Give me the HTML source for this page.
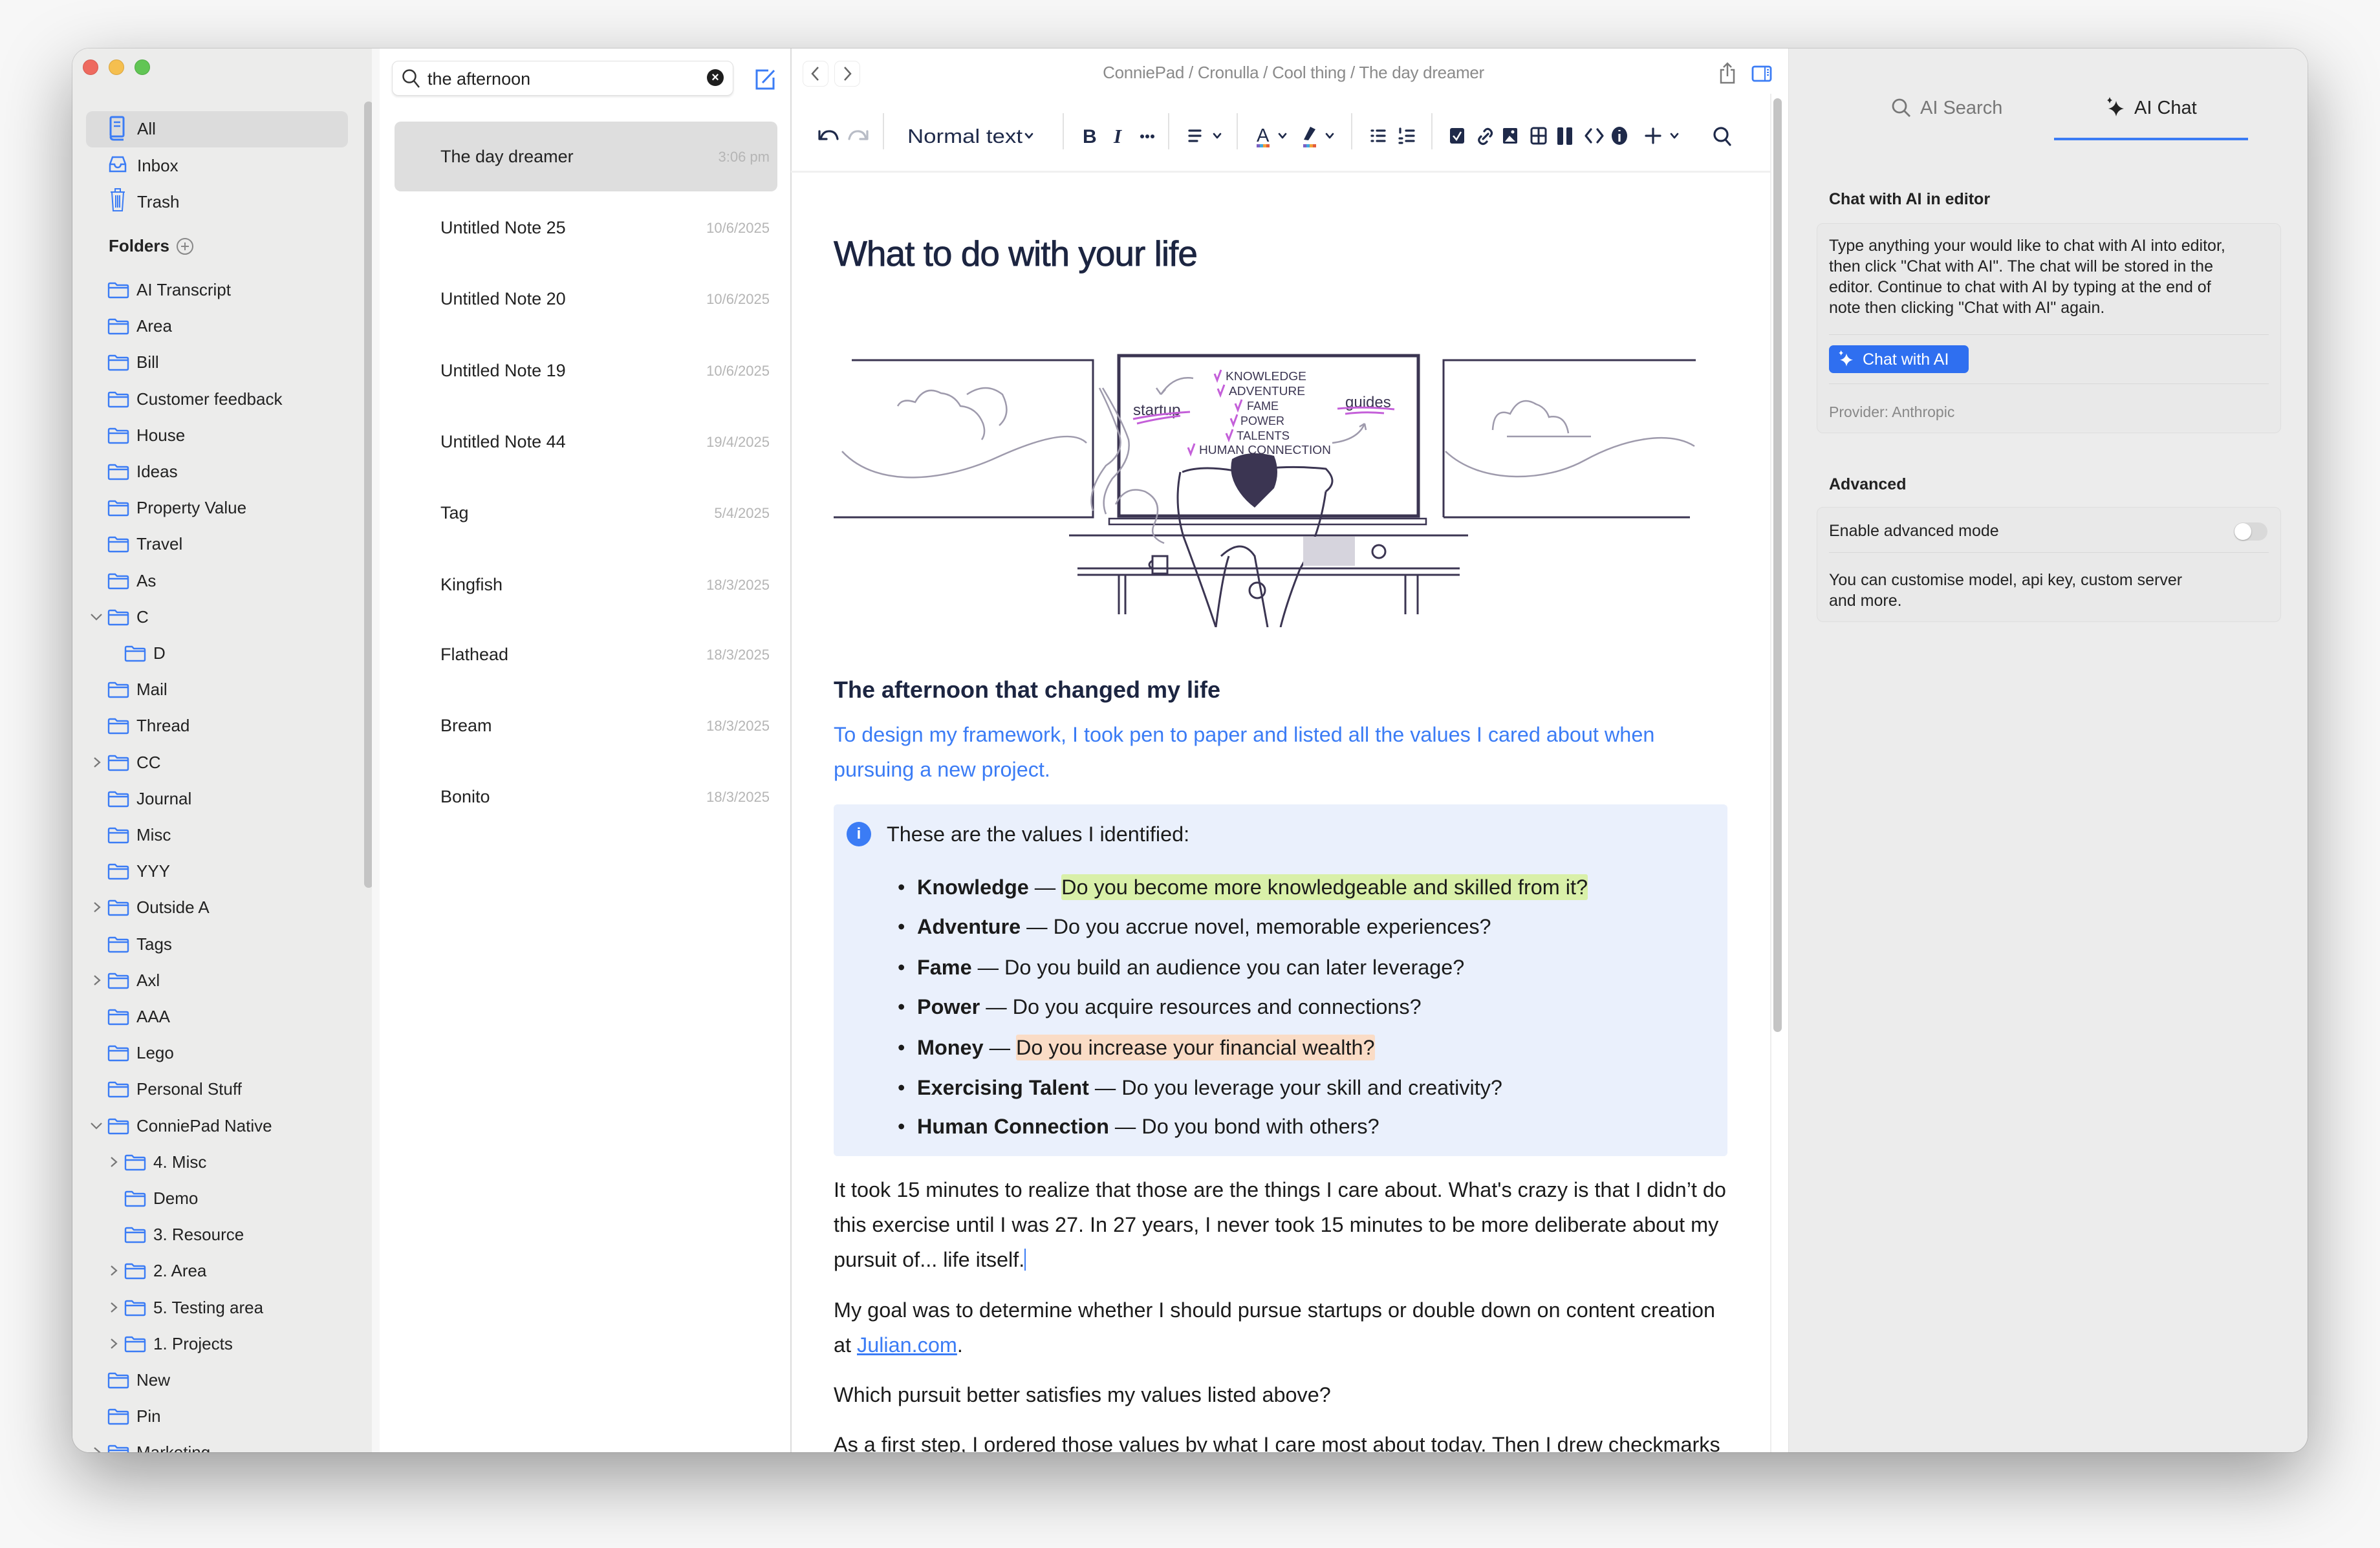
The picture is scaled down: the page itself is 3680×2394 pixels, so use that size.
<!DOCTYPE html>
<html><head><meta charset="utf-8">
<style>
*{margin:0;padding:0;box-sizing:border-box}
html,body{width:3680px;height:2394px;overflow:hidden;background:#f7f7f7;font-family:"Liberation Sans",Arial,sans-serif}
.win{position:absolute;left:112px;top:75px;width:3456px;height:2171px;border-radius:26px;overflow:hidden;background:#fff;box-shadow:0 40px 110px rgba(0,0,0,.38),0 0 0 1px rgba(0,0,0,.12)}
.a{position:absolute;white-space:nowrap}
.sb{position:absolute;left:0;top:0;width:475px;height:2171px;background:#ececeb}
.si{position:absolute;height:40px;line-height:40px;font-size:26px;color:#222;white-space:nowrap}
.fi{position:absolute;width:34px;height:26px}
.nt{position:absolute;left:569px;height:40px;line-height:40px;font-size:27px;color:#222}
.nd{position:absolute;right:2378px;height:40px;line-height:40px;font-size:22px;color:#b5b5b5}
.body{font-size:32.4px;color:#1b1b1b;line-height:54px}
.div{position:absolute;top:100px;width:2px;height:56px;background:#e2e2e2}
</style></head><body>
<div class="win">
 <div class="sb"></div>
 <div class="a" style="left:16px;top:17px;width:24px;height:24px;border-radius:12px;background:#ee6a5f;border:1px solid #d65a50"></div>
 <div class="a" style="left:56px;top:17px;width:24px;height:24px;border-radius:12px;background:#f5bf4f;border:1px solid #d9a53f"></div>
 <div class="a" style="left:96px;top:17px;width:24px;height:24px;border-radius:12px;background:#61c554;border:1px solid #4fab44"></div>
 <div class="a" style="left:21px;top:97px;width:405px;height:56px;border-radius:10px;background:#dcdcdc"></div>
 <div class="a" style="left:451px;top:82px;width:14px;height:1216px;border-radius:7px;background:#c4c4c4"></div>
 <div class="a" style="left:463px;top:0;width:12px;height:2171px;background:#f7f7f7"></div>
 <svg class="a" style="left:56px;top:103px" width="26" height="40" viewBox="0 0 26 40"><rect x="3" y="3" width="20" height="30" rx="2" fill="none" stroke="#3b7cf5" stroke-width="3"/><path d="M3 33 Q3 38 8 38 H23" fill="none" stroke="#3b7cf5" stroke-width="3"/><path d="M8 11h10M8 17h10" stroke="#3b7cf5" stroke-width="2.5"/></svg>
 <div class="si" style="left:100px;top:104px">All</div>
 <svg class="a" style="left:56px;top:166px" width="28" height="26" viewBox="0 0 28 26"><path d="M2 13 L6 2 H22 L26 13 V24 H2 Z M2 13 H9 Q10 18 14 18 Q18 18 19 13 H26" fill="none" stroke="#3b7cf5" stroke-width="2.5"/></svg>
 <div class="si" style="left:100px;top:161px">Inbox</div>
 <svg class="a" style="left:58px;top:215px" width="24" height="38" viewBox="0 0 24 38"><path d="M1 7H23M8 7V2H16V7M3 7L5 36H19L21 7M9 12V31M12 12V31M15 12V31" fill="none" stroke="#3b7cf5" stroke-width="2"/></svg>
 <div class="si" style="left:100px;top:217px">Trash</div>
 <div class="si" style="left:56px;top:285px;font-weight:bold">Folders</div>
 <svg class="a" style="left:160px;top:292px" width="28" height="28" viewBox="0 0 28 28"><circle cx="14" cy="14" r="12" fill="none" stroke="#888" stroke-width="2"/><path d="M14 8V20M8 14H20" stroke="#888" stroke-width="2"/></svg>

 <div style="position:absolute;left:0;top:0">
 <script>
 (function(){
  var items=[["AI Transcript",0,""],["Area",0,""],["Bill",0,""],["Customer feedback",0,""],["House",0,""],["Ideas",0,""],["Property Value",0,""],["Travel",0,""],["As",0,""],["C",0,"d"],["D",1,""],["Mail",0,""],["Thread",0,""],["CC",0,"r"],["Journal",0,""],["Misc",0,""],["YYY",0,""],["Outside A",0,"r"],["Tags",0,""],["Axl",0,"r"],["AAA",0,""],["Lego",0,""],["Personal Stuff",0,""],["ConniePad Native",0,"d"],["4. Misc",1,"r"],["Demo",1,""],["3. Resource",1,""],["2. Area",1,"r"],["5. Testing area",1,"r"],["1. Projects",1,"r"],["New",0,""],["Pin",0,""],["Marketing",0,"r"]];
  var h="";
  for(var i=0;i<items.length;i++){
   var c=373+i*56.2, it=items[i], o=it[1]*26;
   h+='<svg class="fi" style="left:'+(54+o)+'px;top:'+(c-12)+'px" viewBox="0 0 34 26"><path d="M2 4 Q2 2 4 2 H12 L15 5 H30 Q32 5 32 7 V22 Q32 24 30 24 H4 Q2 24 2 22 Z M2 9 H32" fill="none" stroke="#3b7cf5" stroke-width="2.4"/></svg>';
   h+='<div class="si" style="left:'+(99+o)+'px;top:'+(c-20)+'px">'+it[0]+'</div>';
   if(it[2]=="r") h+='<svg class="a" style="left:'+(31+o)+'px;top:'+(c-9)+'px" width="14" height="18"><path d="M3 2L11 9L3 16" fill="none" stroke="#777" stroke-width="2.2"/></svg>';
   if(it[2]=="d") h+='<svg class="a" style="left:'+(27+o)+'px;top:'+(c-7)+'px" width="20" height="14"><path d="M2 3L10 11L18 3" fill="none" stroke="#777" stroke-width="2.2"/></svg>';
  }
  document.write(h);
 })();
 </script>
 </div>

 <!-- note list -->
 <div class="a" style="left:475px;top:0;width:636px;height:2171px;background:#fff"></div>
 <div class="a" style="left:1110px;top:0;width:2px;height:2171px;background:#dcdcdc"></div>
 <div class="a" style="left:494px;top:19px;width:528px;height:54px;border-radius:10px;border:1px solid #e0e0e0;box-shadow:0 2px 3px rgba(0,0,0,.1);background:#fff"></div>
 <svg class="a" style="left:509px;top:31px" width="30" height="32" viewBox="0 0 30 32"><circle cx="12" cy="12" r="9.5" fill="none" stroke="#333" stroke-width="2.5"/><path d="M19 19L27 29" stroke="#333" stroke-width="2.5"/></svg>
 <div class="a" style="left:549px;top:29px;font-size:27px;line-height:36px;color:#222">the afternoon</div>
 <div class="a" style="left:981px;top:32px;width:26px;height:26px;border-radius:13px;background:#1e1e1e;color:#fff;font-size:20px;line-height:26px;text-align:center;font-weight:bold">×</div>
 <svg class="a" style="left:1054px;top:30px" width="36" height="36" viewBox="0 0 36 36"><path d="M22 4H4V32H30V15" fill="none" stroke="#3b7cf5" stroke-width="3"/><path d="M13 23L31 4" stroke="#3b7cf5" stroke-width="3"/></svg>
 <div class="a" style="left:498px;top:113px;width:592px;height:108px;border-radius:10px;background:#dedede"></div>

 <div class="nt" style="top:147px">The day dreamer</div><div class="nd" style="top:148px">3:06 pm</div>
 <div class="nt" style="top:257px">Untitled Note 25</div><div class="nd" style="top:258px">10/6/2025</div>
 <div class="nt" style="top:367px">Untitled Note 20</div><div class="nd" style="top:368px">10/6/2025</div>
 <div class="nt" style="top:478px">Untitled Note 19</div><div class="nd" style="top:479px">10/6/2025</div>
 <div class="nt" style="top:588px">Untitled Note 44</div><div class="nd" style="top:589px">19/4/2025</div>
 <div class="nt" style="top:698px">Tag</div><div class="nd" style="top:699px">5/4/2025</div>
 <div class="nt" style="top:809px">Kingfish</div><div class="nd" style="top:810px">18/3/2025</div>
 <div class="nt" style="top:917px">Flathead</div><div class="nd" style="top:918px">18/3/2025</div>
 <div class="nt" style="top:1027px">Bream</div><div class="nd" style="top:1028px">18/3/2025</div>
 <div class="nt" style="top:1137px">Bonito</div><div class="nd" style="top:1138px">18/3/2025</div>

 <!-- editor header -->
 <div class="a" style="left:1129px;top:19px;width:40px;height:40px;border-radius:9px;border:1px solid #ececec"></div>
 <div class="a" style="left:1178px;top:19px;width:40px;height:40px;border-radius:9px;border:1px solid #ececec"></div>
 <svg class="a" style="left:1129px;top:19px" width="40" height="40"><path d="M24 10L15 20L24 30" fill="none" stroke="#666" stroke-width="2.5"/></svg>
 <svg class="a" style="left:1178px;top:19px" width="40" height="40"><path d="M16 10L25 20L16 30" fill="none" stroke="#666" stroke-width="2.5"/></svg>
 <div class="a" style="left:1400px;top:17px;width:976px;text-align:center;font-size:26px;line-height:40px;color:#8a8a8a;letter-spacing:-0.3px">ConniePad / Cronulla / Cool thing / The day dreamer</div>
 <svg class="a" style="left:2546px;top:21px" width="26" height="34" viewBox="0 0 26 34"><path d="M8 12H3V32H23V12H18M13 22V2M7 8L13 2L19 8" fill="none" stroke="#7a7a7a" stroke-width="2.5"/></svg>
 <svg class="a" style="left:2596px;top:26px" width="32" height="26" viewBox="0 0 32 26"><rect x="2" y="2" width="28" height="22" rx="3" fill="none" stroke="#3b7cf5" stroke-width="2.8"/><path d="M21 2V24M24 7H27M24 11H27M24 15H27" stroke="#3b7cf5" stroke-width="2"/></svg>
 <div class="a" style="left:1111px;top:189px;width:1514px;height:3px;background:#f0f0f0"></div>
 <div class="a" style="left:2630px;top:77px;width:13px;height:1444px;border-radius:7px;background:#c4c4c4"></div>
 <div class="a" style="left:2625px;top:70px;width:2px;height:2101px;background:#ededed"></div>

 <!-- toolbar (window coords) -->
 <svg class="a" style="left:1140px;top:110px" width="1440" height="50" viewBox="1140 110 1440 50" font-family="Liberation Sans">
  <g fill="none" stroke="#1f2a4a" stroke-width="3.2" stroke-linecap="round" stroke-linejoin="round">
   <path d="M1157 140 Q1160 127 1172 128 Q1181 129 1183 140"/><path d="M1155 128 V140 H1166"/>
   <path d="M1201 140 Q1204 127 1216 128 Q1225 129 1227 140" stroke="#b8bcc6"/><path d="M1229 128 V140 H1218" stroke="#b8bcc6"/>
   <path d="M1474 132 L1479 138 L1484 132" stroke-width="2.6"/>
   <path d="M1727 127 H1744 M1727 135 H1744 M1727 143 H1739"/><path d="M1765 132 L1770 138 L1775 132" stroke-width="2.6"/>
   <path d="M1866 132 L1871 138 L1876 132" stroke-width="2.6"/><path d="M1939 132 L1944 138 L1949 132" stroke-width="2.6"/>
   <path d="M2009 127H2011M2009 135H2011M2009 143H2011M2017 127H2029M2017 135H2029M2017 143H2029"/>
   <path d="M2053 124V130M2062 127H2074M2062 135H2074M2062 143H2074M2052 139H2056M2052 146H2056"/>
   <path d="M2181 140 L2189 132 M2178 136 Q2172 141 2177 146 Q2182 150 2187 144 M2192 136 Q2197 131 2192 126 Q2187 122 2183 128"/>
   <path d="M2348 125L2340 135L2348 145M2358 125L2366 135L2358 145"/>
   <path d="M2433 135H2455M2444 124V146"/><path d="M2472 132 L2477 138 L2482 132" stroke-width="2.6"/>
   <circle cx="2549" cy="133" r="10"/><path d="M2556 141L2563 149"/>
  </g>
  <g fill="#1f2a4a">
   <text x="1291" y="146" font-size="31" textLength="178" lengthAdjust="spacingAndGlyphs">Normal text</text>
   <text x="1562" y="146" font-size="30" font-weight="bold">B</text>
   <text x="1610" y="146" font-size="31" font-style="italic" font-family="Liberation Serif" font-weight="bold">I</text>
   <circle cx="1654" cy="136" r="3"/><circle cx="1662" cy="136" r="3"/><circle cx="1670" cy="136" r="3"/>
   <text x="1831" y="144" font-size="29">A</text>
   <rect x="1831" y="148" width="5" height="5" fill="#7b61c4"/><rect x="1836" y="148" width="5" height="5" fill="#3fa8e0"/><rect x="1841" y="148" width="5" height="5" fill="#f2a33a"/><rect x="1846" y="148" width="5" height="5" fill="#e35d3b"/>
   <path d="M1914 121 L1922 125 L1911 142 L1904 141 Z"/>
   <rect x="1903" y="148" width="5" height="5" fill="#7b61c4"/><rect x="1908" y="148" width="5" height="5" fill="#3fa8e0"/><rect x="1913" y="148" width="5" height="5" fill="#f2a33a"/><rect x="1918" y="148" width="5" height="5" fill="#e35d3b"/>
   <rect x="2130" y="123" width="22" height="24" rx="3"/>
   <rect x="2212" y="123" width="22" height="24" rx="2"/>
   <rect x="2296" y="122" width="9" height="27" rx="2"/><rect x="2310" y="122" width="9" height="27" rx="2"/>
   <ellipse cx="2392" cy="135" rx="12" ry="14"/>
  </g>
  <path d="M2135 135 L2140 141 L2147 129" fill="none" stroke="#fff" stroke-width="2.5"/>
  <path d="M2215 144 L2222 135 L2231 144 Z" fill="#fff"/><circle cx="2227" cy="129" r="2.5" fill="#fff"/>
  <rect x="2256" y="123" width="22" height="24" rx="3" fill="none" stroke="#1f2a4a" stroke-width="3"/><path d="M2267 123V147M2256 135H2278" stroke="#1f2a4a" stroke-width="3"/>
  <path d="M2392 126V128M2392 132V144" stroke="#fff" stroke-width="3.2"/>
 </svg>
 <div class="div" style="left:1253px"></div><div class="div" style="left:1531px"></div><div class="div" style="left:1694px"></div><div class="div" style="left:1800px"></div><div class="div" style="left:1977px"></div><div class="div" style="left:2101px"></div>

 <!-- editor content -->
 <div class="a" style="left:1177px;top:285px;font-size:55px;color:#1c2541;line-height:64px;letter-spacing:-1px;-webkit-text-stroke:0.8px #1c2541">What to do with your life</div>

 <svg class="a" style="left:1168px;top:455px" width="1360" height="440" viewBox="0 0 1360 440" font-family="Liberation Sans">
  <g fill="none" stroke="#3b3552" stroke-width="3">
   <path d="M37 27H410V270H9"/>
   <rect x="450" y="20" width="463" height="248" stroke-width="5"/>
   <path d="M952 270V27H1342M952 270H1333"/>
   <path d="M435 272H925V281H435Z" stroke-width="2.5"/>
   <path d="M373 298H990M386 349H977M386 359H977"/>
   <path d="M450 359V420M460 359V420M893 359V420M912 359V420"/>
  </g>
  <g fill="none" stroke="#9e9aac" stroke-width="2.5">
   <path d="M22 168 C80 230 190 210 260 178 S380 135 400 155"/>
   <path d="M955 168 C1010 220 1110 215 1170 182 S1300 135 1340 160"/>
   <path d="M108 98 Q115 85 135 92 Q150 65 175 78 Q195 80 205 98 Q230 100 240 125 Q245 140 238 150"/>
   <path d="M215 80 Q245 60 270 80 Q285 110 265 128"/>
   <path d="M1028 135 Q1030 100 1055 110 Q1070 80 1095 95 Q1110 100 1115 115 Q1140 110 1145 140 M1050 145 H1180"/>
   <path d="M420 70 Q440 110 450 140 Q460 170 430 190 Q400 230 410 260 M425 70 Q455 120 465 150 Q470 180 440 210 Q420 240 430 265 M445 250 Q460 220 490 230 Q520 245 505 280 Q495 300 520 310"/>
   <path d="M565 55 Q535 50 515 80 M515 80 L508 70 M515 80 L522 72"/>
   <path d="M780 155 Q820 150 830 125 M830 125 L822 130 M830 125 L832 135"/>
  </g>
  <g fill="#3b3552" font-size="18">
   <text x="615" y="58" textLength="125" lengthAdjust="spacingAndGlyphs">KNOWLEDGE</text>
   <text x="620" y="81" textLength="118" lengthAdjust="spacingAndGlyphs">ADVENTURE</text>
   <text x="648" y="104">FAME</text>
   <text x="638" y="127">POWER</text>
   <text x="632" y="150" textLength="82" lengthAdjust="spacingAndGlyphs">TALENTS</text>
   <text x="574" y="172" textLength="204" lengthAdjust="spacingAndGlyphs">HUMAN CONNECTION</text>
   <text x="472" y="112" font-size="24">startup</text>
   <text x="800" y="100" font-size="24">guides</text>
  </g>
  <g fill="none" stroke="#c45fd9" stroke-width="3">
   <path d="M598 48L602 58L608 42M603 71L607 81L613 65M630 94L634 104L640 88M623 117L627 127L633 111M616 140L620 150L626 134M557 162L561 172L567 156"/>
   <path d="M472 118 Q510 110 560 107 M478 125 Q510 117 545 113"/>
   <path d="M788 102 Q830 98 876 103 M800 110 Q830 106 860 109"/>
  </g>
  <g fill="none" stroke="#3b3552" stroke-width="3">
   <path d="M548 200 Q580 188 640 200 Q700 188 770 195 Q790 215 770 230"/>
   <path d="M545 200 Q535 250 550 300 Q580 380 600 440 M770 230 Q760 300 730 350 Q710 400 700 440"/>
   <path d="M608 330 Q640 300 660 330 L680 440 M600 440 Q610 360 620 330"/>
   <circle cx="664" cy="383" r="12"/><circle cx="852" cy="323" r="10"/>
   <path d="M502 330H525V357H502Z M502 337 Q492 343 502 350"/>
  </g>
  <path d="M625 180 Q650 165 690 175 Q700 200 690 225 Q670 245 660 255 Q640 240 630 220 Q620 200 625 180Z" fill="#3b3552"/>
  <rect x="735" y="300" width="80" height="45" fill="#d6d4dd"/>
 </svg>

 <div class="a" style="left:1177px;top:970px;font-size:36px;font-weight:bold;color:#1c2541;line-height:44px">The afternoon that changed my life</div>
 <div class="a body" style="left:1177px;top:1034px;color:#3b7cf5">To design my framework, I took pen to paper and listed all the values I cared about when<br>pursuing a new project.</div>

 <div class="a" style="left:1177px;top:1169px;width:1382px;height:544px;background:#eaf0fc;border-radius:6px"></div>
 <div class="a" style="left:1197px;top:1196px;width:38px;height:38px;border-radius:19px;background:#3b7cf5;color:#fff;font-size:24px;font-weight:bold;text-align:center;line-height:38px">i</div>
 <div class="a body" style="left:1259px;top:1188px">These are the values I identified:</div>
 <div class="a body" style="left:1276px;top:1270px">•</div><div class="a body" style="left:1306px;top:1270px"><b>Knowledge</b> — <span style="background:#d9f0a9;border-radius:3px;padding:2px 0">Do you become more knowledgeable and skilled from it?</span></div>
 <div class="a body" style="left:1276px;top:1331px">•</div><div class="a body" style="left:1306px;top:1331px"><b>Adventure</b> — Do you accrue novel, memorable experiences?</div>
 <div class="a body" style="left:1276px;top:1394px">•</div><div class="a body" style="left:1306px;top:1394px"><b>Fame</b> — Do you build an audience you can later leverage?</div>
 <div class="a body" style="left:1276px;top:1455px">•</div><div class="a body" style="left:1306px;top:1455px"><b>Power</b> — Do you acquire resources and connections?</div>
 <div class="a body" style="left:1276px;top:1518px">•</div><div class="a body" style="left:1306px;top:1518px"><b>Money</b> — <span style="background:#fadcc6;border-radius:3px;padding:2px 0">Do you increase your financial wealth?</span></div>
 <div class="a body" style="left:1276px;top:1580px">•</div><div class="a body" style="left:1306px;top:1580px"><b>Exercising Talent</b> — Do you leverage your skill and creativity?</div>
 <div class="a body" style="left:1276px;top:1640px">•</div><div class="a body" style="left:1306px;top:1640px"><b>Human Connection</b> — Do you bond with others?</div>

 <div class="a body" style="left:1177px;top:1738px">It took 15 minutes to realize that those are the things I care about. What's crazy is that I didn’t do<br>this exercise until I was 27. In 27 years, I never took 15 minutes to be more deliberate about my<br>pursuit of... life itself.<span style="display:inline-block;width:2px;height:34px;background:#3b7cf5;vertical-align:-6px"></span></div>
 <div class="a body" style="left:1177px;top:1924px">My goal was to determine whether I should pursue startups or double down on content creation<br>at <span style="color:#3b7cf5;text-decoration:underline">Julian.com</span>.</div>
 <div class="a body" style="left:1177px;top:2055px">Which pursuit better satisfies my values listed above?</div>
 <div class="a body" style="left:1177px;top:2132px">As a first step, I ordered those values by what I care most about today. Then I drew checkmarks</div>

 <!-- right panel -->
 <div class="a" style="left:2653px;top:0;width:803px;height:2171px;background:#ececec;border-left:1px solid #e0e0e0"></div>
 <svg class="a" style="left:2812px;top:76px" width="32" height="32" viewBox="0 0 32 32"><circle cx="13" cy="13" r="10" fill="none" stroke="#777" stroke-width="2.8"/><path d="M20 20L29 29" stroke="#777" stroke-width="2.8"/></svg>
 <div class="a" style="left:2857px;top:72px;font-size:29px;line-height:40px;color:#777">AI Search</div>
 <svg class="a" style="left:3142px;top:73px" width="36" height="36" viewBox="0 0 36 36"><path d="M18 8 Q20 18 30 20 Q20 22 18 32 Q16 22 6 20 Q16 18 18 8Z" fill="#222"/><path d="M8 2 Q9 6 12 7 Q9 8 8 12 Q7 8 4 7 Q7 6 8 2Z" fill="#222"/></svg>
 <div class="a" style="left:3188px;top:72px;font-size:29px;line-height:40px;color:#222">AI Chat</div>
 <div class="a" style="left:3064px;top:138px;width:300px;height:4px;background:#3b7cf5"></div>

 <div class="a" style="left:2716px;top:216px;font-size:25px;font-weight:bold;color:#222;line-height:34px">Chat with AI in editor</div>
 <div class="a" style="left:2697px;top:270px;width:718px;height:325px;border:1px solid #dedede;border-radius:10px;background:#e9e9e9"></div>
 <div class="a" style="left:2716px;top:289px;font-size:25px;color:#222;line-height:32px">Type anything your would like to chat with AI into editor,<br>then click "Chat with AI". The chat will be stored in the<br>editor. Continue to chat with AI by typing at the end of<br>note then clicking "Chat with AI" again.</div>
 <div class="a" style="left:2716px;top:442px;width:680px;height:1px;background:#d8d8d8"></div>
 <div class="a" style="left:2716px;top:459px;width:216px;height:43px;border-radius:7px;background:#2f6ff0"></div>
 <svg class="a" style="left:2728px;top:465px" width="30" height="30" viewBox="0 0 36 36"><path d="M18 8 Q20 18 30 20 Q20 22 18 32 Q16 22 6 20 Q16 18 18 8Z" fill="#fff"/><path d="M8 2 Q9 6 12 7 Q9 8 8 12 Q7 8 4 7 Q7 6 8 2Z" fill="#fff"/></svg>
 <div class="a" style="left:2768px;top:462px;font-size:25px;color:#fff;line-height:38px">Chat with AI</div>
 <div class="a" style="left:2716px;top:518px;width:680px;height:1px;background:#d8d8d8"></div>
 <div class="a" style="left:2716px;top:545px;font-size:23px;color:#888;line-height:34px">Provider: Anthropic</div>

 <div class="a" style="left:2716px;top:657px;font-size:25px;font-weight:bold;color:#222;line-height:34px">Advanced</div>
 <div class="a" style="left:2697px;top:709px;width:718px;height:178px;border:1px solid #dedede;border-radius:10px;background:#e9e9e9"></div>
 <div class="a" style="left:2716px;top:729px;font-size:25px;color:#222;line-height:34px">Enable advanced mode</div>
 <div class="a" style="left:3342px;top:733px;width:52px;height:28px;border-radius:14px;background:#d9d9d9"></div>
 <div class="a" style="left:3343px;top:734px;width:26px;height:26px;border-radius:13px;background:#fff;box-shadow:0 1px 2px rgba(0,0,0,.3)"></div>
 <div class="a" style="left:2716px;top:779px;width:680px;height:1px;background:#d8d8d8"></div>
 <div class="a" style="left:2716px;top:806px;font-size:25px;color:#222;line-height:32px">You can customise model, api key, custom server<br>and more.</div>
</div>
</body></html>
